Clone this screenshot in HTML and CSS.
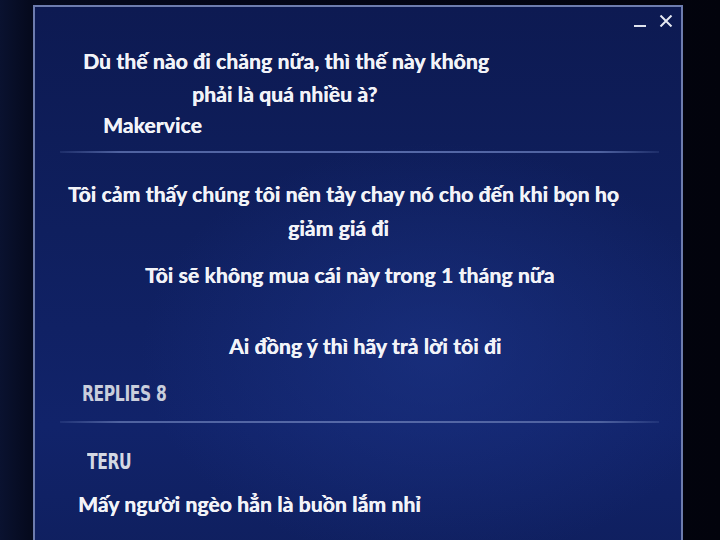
FILE: index.html
```html
<!DOCTYPE html>
<html lang="vi">
<head>
<meta charset="utf-8">
<title>Bình luận</title>
<link rel="stylesheet" href="styles.css">
</head>
<body>
<div class="screen">
  <section class="panel">
    <div class="controls">
      <span class="ctl-min"></span>
      <svg class="ctl-close" viewBox="0 0 14 12" width="14" height="12"><path d="M1.5 0.5 L12.5 11.5 M12.5 0.5 L1.5 11.5" stroke="#e6e9f2" stroke-width="2" fill="none"/></svg>
    </div>

    <article class="post post-first">
      <p class="line l1">Dù thế nào đi chăng nữa, thì thế này không</p>
      <p class="line l2">phải là quá nhiều à?</p>
      <p class="line l3">Makervice</p>
    </article>

    <hr class="rule">

    <article class="post post-main">
      <p class="line l4">Tôi cảm thấy chúng tôi nên tảy chay nó cho đến khi bọn họ</p>
      <p class="line l5">giảm giá đi</p>
      <p class="line l6">Tôi sẽ không mua cái này trong 1 tháng nữa</p>
      <p class="line l7">Ai đồng ý thì hãy trả lời tôi đi</p>
    </article>

    <div class="replies">REPLIES 8</div>

    <hr class="rule">

    <article class="reply">
      <div class="author">TERU</div>
      <p class="line l10">Mấy người ngèo hẳn là buồn lắm nhỉ</p>
    </article>
  </section>
</div>
</body>
</html>
```
FILE: styles.css
```css
html, body {
  margin: 0;
  padding: 0;
  width: 720px;
  height: 540px;
  overflow: hidden;
  background: #02030b;
}

.screen {
  width: 720px;
  height: 540px;
  padding: 5px 0 0 33px;
  box-sizing: border-box;
  background: linear-gradient(90deg, #0a1230 0%, #050a1e 4%, #03061a 30%, #02030c 100%);
}

.panel {
  position: relative;
  width: 650px;
  height: 560px;
  box-sizing: border-box;
  border: 2px solid #6d7cae;
  border-bottom: none;
  background:
    radial-gradient(ellipse 420px 300px at 62% 62%, rgba(30, 55, 140, 0.55), rgba(30, 55, 140, 0) 70%),
    linear-gradient(180deg, #0d1a52 0%, #0f1f5e 40%, #11236a 75%, #0f1f5e 100%);
  font-family: Lato, "Open Sans", sans-serif;
  font-weight: 700;
  color: #f2f3f8;
}

.controls {
  position: absolute;
  top: 8px;
  right: 8px;
  display: flex;
  align-items: center;
  gap: 13px;
}

.ctl-min {
  display: block;
  width: 12px;
  height: 2px;
  margin-top: 9px;
  background: #dfe3ee;
}

.ctl-close {
  display: block;
}

/* comment text: bold, a touch heavier than the plain bold face */
.line {
  margin: 0;
  font-size: 21px;
  line-height: 31px;
  white-space: nowrap;
  letter-spacing: 0.15px;
  text-shadow: 0.4px 0 0 currentColor;
}

.post-first {
  padding-top: 38px;
}

.l1 { padding-left: 48px; }
.l2 { padding-left: 157px; margin-top: 2px; }
.l3 { padding-left: 68px; margin-top: 0; }

.rule {
  margin: 0 22px 0 25px;
  height: 2px;
  border: none;
  background: linear-gradient(90deg, rgba(90, 110, 170, 0.2), #4f62a0 10%, #5669a8 50%, #4f62a0 90%, rgba(90, 110, 170, 0.2));
}

.post-first + .rule { margin-top: 11px; }

.post-main {
  padding-top: 25px;
}

.l4 { padding-left: 33px; }
.l5 { padding-left: 253px; margin-top: 3px; }
.l6 { padding-left: 110px; margin-top: 16px; }
.l7 { padding-left: 194px; margin-top: 40px; }

/* condensed all-caps labels */
.replies {
  box-sizing: border-box;
  height: 44px;
  padding: 21px 0 0 47px;
  font-family: "DejaVu Sans", sans-serif;
  font-size: 21px;
  line-height: 24px;
  letter-spacing: -0.5px;
  color: #c9cedc;
  transform: scaleX(0.74);
  transform-origin: 47px 0;
  white-space: nowrap;
}

.replies + .rule { margin-top: 16px; }

.reply {
  padding-top: 27px;
}

.author {
  padding-left: 52px;
  font-family: "DejaVu Sans", sans-serif;
  font-size: 21px;
  line-height: 24px;
  letter-spacing: -0.5px;
  color: #d4d8e4;
  transform: scaleX(0.74);
  transform-origin: 52px 0;
}

.l10 { padding-left: 43px; margin-top: 14px; }
```
